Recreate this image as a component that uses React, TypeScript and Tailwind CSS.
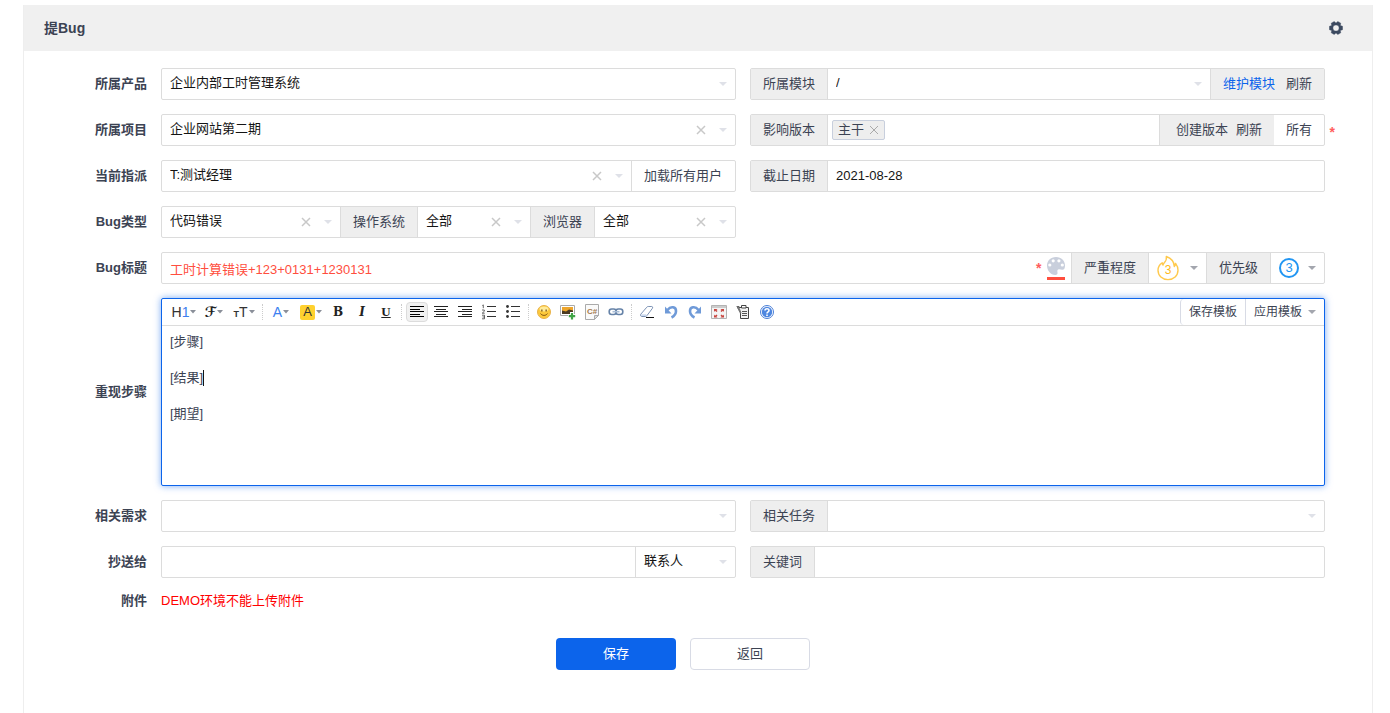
import clsx from "clsx";
import { useState } from "react";
import type { ReactNode } from "react";

type Children = { children?: ReactNode; className?: string };

function Caret({ className }: { className?: string }) {
  return (
    <svg viewBox="0 0 8 4" className={clsx("pointer-events-none h-1 w-2 fill-current", className)} aria-hidden="true">
      <path d="M0 0h8L4 4z" />
    </svg>
  );
}

function Cross({ className }: { className?: string }) {
  return (
    <svg viewBox="0 0 10 10" className={clsx("stroke-current", className)} fill="none" aria-hidden="true">
      <path d="M1 1l8 8M9 1l-8 8" />
    </svg>
  );
}

function Group({ children, className }: Children) {
  return (
    <div className={clsx("flex h-8 min-w-0 divide-x divide-[#dcdcdc] rounded-xs border border-[#dcdcdc] bg-white", className)}>
      {children}
    </div>
  );
}

function Addon({ children, htmlFor }: Children & { htmlFor: string }) {
  return (
    <label htmlFor={htmlFor} className="flex shrink-0 items-center bg-[#eeeeee] px-3">
      {children}
    </label>
  );
}

type SelectBoxProps = {
  id: string;
  value: string;
  label?: string;
  clearable?: boolean;
  className?: string;
};

function SelectBox({ id, value, label, clearable, className = "flex-1" }: SelectBoxProps) {
  const [current, setCurrent] = useState<string>(value);

  return (
    <div className={clsx("relative min-w-0", className)}>
      <select
        id={id}
        aria-label={label}
        value={current}
        onChange={(e) => setCurrent(e.target.value)}
        className="block h-7 w-full appearance-none bg-transparent pr-11 pl-2 text-[#141414] outline-none"
      >
        <option value={value}>{value}</option>
        {value && <option value="" />}
      </select>
      {clearable && (
        <button
          type="button"
          aria-label="清除"
          onClick={() => setCurrent("")}
          className="absolute inset-y-0 right-7 flex w-3 items-center justify-center text-[#c8c8c8]"
        >
          <Cross className="size-[10px] stroke-[1.5]" />
        </button>
      )}
      <Caret className="absolute top-[13px] right-2 text-[#dfe1e8]" />
    </div>
  );
}

function Row({ label, htmlFor, children, className = "h-8" }: Children & { label: string; htmlFor?: string }) {
  return (
    <div className="flex items-center gap-3.5">
      <label htmlFor={htmlFor} className={clsx("flex w-[106px] shrink-0 items-center justify-end font-bold", className)}>
        {label}
      </label>
      {children}
    </div>
  );
}

function Columns({ children }: Children) {
  return <div className="grid min-w-0 flex-1 grid-cols-2 gap-3.5">{children}</div>;
}

function Gear() {
  return (
    <svg viewBox="0 0 14 14" className="size-[14px]" aria-hidden="true">
      <path
        fill="#3c4a60"
        stroke="#3c4a60"
        strokeWidth=".4"
        strokeLinejoin="round"
        fillRule="evenodd"
        d="M13.600 5.300v3.400L11.300 9.500l.5 2.300-3 1.800L7 11.900l-1.800 1.700-3-1.800.5-2.300-2.300-.8V5.300l2.300-.8-.5-2.300 3-1.800L7 2.100 8.800.4l3 1.800-.5 2.300zM7 3.900a3.100 3.100 0 1 0 0 6.200 3.100 3.100 0 0 0 0-6.200z"
      />
    </svg>
  );
}

function Palette() {
  return (
    <svg viewBox="0 0 20 18" className="h-[18px] w-5" aria-hidden="true">
      <path
        fill="#c9cfdc"
        fillRule="evenodd"
        d="M10 0C4.500 0 1 3.800 1 8.600 1 13.700 4.500 18 9.300 18c1.700 0 2.500-1 2.200-2.400-.4-1.700-.2-3.200 1.600-3.300l3 .4c2 .2 2.900-1.500 2.900-4C19 3.600 15.500 0 10 0zM7.200 2.200a1.600 1.600 0 1 1 0 3.200 1.600 1.600 0 0 1 0-3.200zm5.700 0a1.600 1.600 0 1 1 0 3.200 1.600 1.600 0 0 1 0-3.200zM3.800 6.400a1.600 1.600 0 1 1 0 3.200 1.600 1.600 0 0 1 0-3.200zm12.500 0a1.600 1.600 0 1 1 0 3.200 1.600 1.600 0 0 1 0-3.200z"
      />
    </svg>
  );
}

function Flame() {
  return (
    <svg viewBox="0 0 22 26" className="h-[26px] w-[22px]" fill="none" stroke="#ffc94d" aria-hidden="true">
      <path
        strokeWidth="1.400"
        strokeLinejoin="round"
        d="M9.300 1.500c.6 2.700-.3 4.400-2 6.200-.7.800-1.100 1.500-1.300 2.300-.5-.7-.8-1.400-.8-2.200C2.300 9.600 1 12.300 1 15.300 1 20.700 5.300 24.600 11 24.600s10-3.900 10-9.300c0-2.500-.9-4.900-2.400-6.900-.1 1.300-.5 2.200-1.300 3-.2-4.500-3.200-8.200-8-9.900z"
      />
    </svg>
  );
}

function Tool({ title, children, active, wide }: Children & { title: string; active?: boolean; wide?: boolean }) {
  return (
    <div className={clsx("flex shrink-0 items-center justify-center", wide ? "w-[30px]" : "w-6")}>
      <button
        type="button"
        title={title}
        className={clsx(
          "flex h-5 items-center justify-center rounded-sm border",
          wide ? "gap-px" : "w-[22px]",
          active ? "border-[#dcdcdc] bg-[#f1f1f1]" : "border-transparent",
        )}
      >
        {children}
        {wide && (
          <svg viewBox="0 0 6 4" className="h-1 w-1.5" fill="#8a8f99" aria-hidden="true">
            <path d="M0 0h6L3 3.500z" />
          </svg>
        )}
      </button>
    </div>
  );
}

function Separator() {
  return (
    <div className="flex w-[7px] shrink-0 items-center justify-center">
      <div className="h-4 border-l border-dotted border-[#cccccc]" />
    </div>
  );
}

function Icon({ children }: Children) {
  return (
    <svg viewBox="0 0 16 16" className="size-4 shrink-0" fill="none" aria-hidden="true">
      {children}
    </svg>
  );
}

function Toolbar() {
  return (
    <div className="flex h-[27px] border-b border-[#dcdcdc]">
      <div className="flex flex-1 overflow-hidden pl-[7px]">
        <Tool title="段落" wide>
          <span className="text-sm text-[#333333]">
            H<span className="text-[#3d7ff0]">1</span>
          </span>
        </Tool>
        <Tool title="字体" wide>
          <span className="font-['DejaVu_Sans',sans-serif] text-sm font-bold text-[#222222] italic">ℱ</span>
        </Tool>
        <Tool title="文字大小" wide>
          <span className="text-sm text-[#333333]">
            <span className="text-[9px] font-bold">T</span>T
          </span>
        </Tool>
        <Separator />
        <Tool title="文字颜色" wide>
          <span className="text-sm text-[#3d7ff0]">A</span>
        </Tool>
        <Tool title="文字背景" wide>
          <span className="flex h-[15px] w-[15px] items-center justify-center rounded-xs bg-[#ffd12f] text-[13px] text-[#333333]">A</span>
        </Tool>
        <Tool title="粗体">
          <span className="font-['DejaVu_Serif',serif] text-xs font-bold text-[#222222]">B</span>
        </Tool>
        <Tool title="斜体">
          <span className="font-['DejaVu_Serif',serif] text-xs font-bold text-[#222222] italic">I</span>
        </Tool>
        <Tool title="下划线">
          <span className="font-['Liberation_Serif',serif] text-[13px] font-bold text-[#222222] underline">U</span>
        </Tool>
        <Separator />
        <Tool title="左对齐" active>
          <Icon>
            <path stroke="#000" d="M1 2.500h14M1 5.500h10M1 7.500h14M1 10.500h10M1 12.500h14" />
          </Icon>
        </Tool>
        <Tool title="居中">
          <Icon>
            <path stroke="#222" d="M1 2.500h14M3 5.500h10M1 7.500h14M3 10.500h10M1 12.500h14" />
          </Icon>
        </Tool>
        <Tool title="右对齐">
          <Icon>
            <path stroke="#222" d="M1 2.500h14M5 5.500h10M1 7.500h14M5 10.500h10M1 12.500h14" />
          </Icon>
        </Tool>
        <Tool title="编号">
          <Icon>
            <path stroke="#333" d="M6 2.500h9M6 7.500h9M6 12.500h9" />
            <path stroke="#444" strokeWidth=".8" d="M1.300 1.500l1-.6v3.300M1 6h2.300v1.300L1.200 9.200h2.500M1 11.200h2.500v3.600H1M1.500 13h2" />
          </Icon>
        </Tool>
        <Tool title="项目符号">
          <Icon>
            <path stroke="#333" d="M6 2.500h9M6 7.500h9M6 12.500h9" />
            <circle cx="2.500" cy="2.500" r="1.400" fill="#333" />
            <circle cx="2.500" cy="7.500" r="1.400" fill="#333" />
            <circle cx="2.500" cy="12.500" r="1.400" fill="#333" />
          </Icon>
        </Tool>
        <Separator />
        <Tool title="插入表情">
          <Icon>
            <circle cx="8" cy="8" r="6.500" fill="#fcc93c" stroke="#e9b24a" />
            <ellipse cx="8" cy="5" rx="4.500" ry="2.500" fill="#ffeb9a" />
            <path fill="#7b5719" d="M5.200 5.500h1.300v2H5.200zM9.500 5.500h1.300v2H9.500z" />
            <path stroke="#8a5a14" d="M4.500 9.500c1.500 2.500 5.500 2.500 7 0" />
          </Icon>
        </Tool>
        <Tool title="图片">
          <Icon>
            <path fill="#fff" stroke="#aaa" d="M.5 1.500h14v10H.5z" />
            <path fill="#4a3a22" d="M2 3h11v7H2z" />
            <path fill="#eda52c" d="M2 3h11v3.500L9 5.500 6 7.500l-4-1z" />
            <path stroke="#fff" strokeWidth="4" d="M12 8v8M8 12h8" />
            <path stroke="#3fa446" strokeWidth="2.200" d="M12 9v6.500M8.800 12.200h6.400" />
          </Icon>
        </Tool>
        <Tool title="插入程序代码">
          <span className="relative flex size-4 items-center justify-center">
            <svg viewBox="0 0 16 16" className="absolute inset-0 size-4" fill="#fafafa" stroke="#aaaaaa" aria-hidden="true">
              <path d="M1.500.500h13v11l-4 4h-9z" />
              <path fill="#ddd" d="M10.500 15.500v-4h4z" />
            </svg>
            <span className="relative text-[8px] leading-none font-bold text-[#a5794a]">C#</span>
          </span>
        </Tool>
        <Tool title="超级链接">
          <Icon>
            <rect x="1.200" y="5" width="7" height="5.500" rx="2.500" stroke="#6683a8" strokeWidth="1.600" />
            <rect x="7.800" y="5" width="7" height="5.500" rx="2.500" stroke="#6683a8" strokeWidth="1.600" />
            <path stroke="#a9bdd6" strokeWidth="1.600" d="M4.500 7.700h7" />
          </Icon>
        </Tool>
        <Separator />
        <Tool title="删除格式">
          <Icon>
            <path fill="#fff" stroke="#7d93b5" strokeLinejoin="round" d="M1.500 10.500L7.800 3.200q.5-.7 1.400-.7h3.600q1.500.3.700 1.700L7.800 11.800q-.6.700-1.500.7H3q-2-.4-1.500-2z" />
            <path fill="#cfdcf0" d="M2 10.300h5.200l.3 1.200q-.6.500-1.300.5H3q-1.300-.3-1-1.700z" />
            <path stroke="#111" d="M7 13.500h8" />
          </Icon>
        </Tool>
        <Tool title="后退">
          <Icon>
            <path stroke="#6f9ad8" strokeWidth="2.600" d="M4.500 6C8 1.500 13 3 13 7c0 3-1.500 5-4.500 6.500" />
            <path fill="#6f9ad8" d="M2 2.500v7h6.500z" />
          </Icon>
        </Tool>
        <Tool title="前进">
          <Icon>
            <path stroke="#6f9ad8" strokeWidth="2.600" d="M11.500 6C8 1.500 3 3 3 7c0 3 1.500 5 4.500 6.500" />
            <path fill="#6f9ad8" d="M14 2.500v7H7.500z" />
          </Icon>
        </Tool>
        <Tool title="全屏显示">
          <Icon>
            <path fill="#f4f4f4" stroke="#b3b3b3" d="M.5 1.500h15v13H.5z" />
            <path fill="#ccc" d="M1 2h14v2H1z" />
            <path fill="#c8453f" d="M3 5h3.500L5.500 6l1 1L5.500 8 4 6.800 3 8zM13 5H9.500l1 1-1 1 1 1L12 6.800 13 8zM3 13.500h3.500l-1-1 1-1-1-1L4 11.700l-1-1.200zM13 13.500H9.500l1-1-1-1 1-1 1.500 1.200 1-1.200z" />
          </Icon>
        </Tool>
        <Tool title="源代码">
          <Icon>
            <path fill="#f2f2f2" stroke="#444" d="M4 3.500h9.500v11h-8v-6L2 2.500h2z" />
            <path fill="#fff" stroke="#444" d="M6.500 1.500h4.500v2.500H6.500z" />
            <path stroke="#555" d="M7 7.500h5M7 9.500h5M7 11.500h5" />
            <path fill="#777" d="M1.500 2l2.500.5 2.500 6.500-1.500.5z" />
          </Icon>
        </Tool>
        <Tool title="帮助">
          <Icon>
            <circle cx="8" cy="8" r="6.500" fill="#fff" stroke="#4a7ed6" />
            <circle cx="8" cy="8" r="5.200" fill="#4d86e0" />
            <path stroke="#fff" strokeWidth="1.600" d="M6 6.500C6 4.200 10 4.200 10 6.500 10 7.800 8 7.800 8 9.500M8 10.600v1.500" />
          </Icon>
        </Tool>
      </div>
      <button type="button" className="rounded-l-sm border-l border-[#d8dbe5] px-2 text-xs">
        保存模板
      </button>
      <button type="button" className="flex items-center gap-1.5 border-l border-[#d8dbe5] px-2 text-xs">
        应用模板
        <Caret className="text-[#a3a6ae]" />
      </button>
    </div>
  );
}

function Editor() {
  return (
    <div className="h-[188px] min-w-0 flex-1 rounded-xs border border-[#0c64eb] bg-white shadow-[0_0_7px_rgba(12,100,235,0.55)]">
      <Toolbar />
      <div className="relative">
        <textarea
          id="steps"
          defaultValue={"[步骤]\n\n[结果]\n\n[期望]"}
          className="block h-[158px] w-full resize-none bg-transparent px-2 py-[7px] leading-[18px] outline-none"
        />
        <span className="pointer-events-none absolute top-11 left-[41px] h-4 w-px bg-[#141414]" />
      </div>
    </div>
  );
}

export default function App() {
  return (
    <div className="flex min-h-screen flex-col bg-white pt-[5px] pr-[17px] pl-[23px] font-['Liberation_Sans','Noto_Sans_CJK_SC',sans-serif] text-[13px] leading-[18px] text-[#3c4353]">
      <main className="flex-1 border-x border-[#eeeeee]">
        <header className="flex h-[46px] items-center justify-between bg-[#f0f0f0] pr-[29px] pl-5">
          <h1 className="text-sm font-bold">提Bug</h1>
          <button type="button" aria-label="设置">
            <Gear />
          </button>
        </header>

        <form className="flex flex-col gap-3.5 pt-[17px] pr-[47px] pb-10 pl-[17px]" onSubmit={(e) => e.preventDefault()}>
          <Row label="所属产品" htmlFor="product">
            <Columns>
              <Group>
                <SelectBox id="product" value="企业内部工时管理系统" />
              </Group>
              <Group>
                <Addon htmlFor="module">所属模块</Addon>
                <SelectBox id="module" value="/" />
                <div className="flex shrink-0 items-center gap-[11px] bg-[#eeeeee] px-3">
                  <a href="#module" className="text-[#0c64eb]">
                    维护模块
                  </a>
                  <a href="#refresh">刷新</a>
                </div>
              </Group>
            </Columns>
          </Row>

          <Row label="所属项目" htmlFor="project">
            <Columns>
              <Group>
                <SelectBox id="project" value="企业网站第二期" clearable />
              </Group>
              <div className="relative">
                <Group>
                  <Addon htmlFor="build">影响版本</Addon>
                  <div className="flex min-w-0 flex-1 items-center gap-1 pl-1">
                    <span className="flex h-5 shrink-0 items-center gap-[5px] rounded-xs border border-[#c8cfdd] bg-[#eeeeee] px-[5px]">
                      主干
                      <button type="button" aria-label="移除主干" className="text-[#aaaaaa]">
                        <Cross className="size-[10px]" />
                      </button>
                    </span>
                    <input id="build" type="text" className="h-7 w-full min-w-0 flex-1 outline-none" />
                  </div>
                  <div className="flex shrink-0">
                    <div className="flex items-center gap-2 bg-[#eeeeee] pr-3 pl-4">
                      <a href="#create">创建版本</a>
                      <a href="#refresh">刷新</a>
                    </div>
                    <button type="button" className="px-3">
                      所有
                    </button>
                  </div>
                </Group>
                <span className="absolute top-2 -right-[10px] text-sm font-bold text-[#ff5d5d]">*</span>
              </div>
            </Columns>
          </Row>

          <Row label="当前指派" htmlFor="assigned">
            <Columns>
              <Group>
                <SelectBox id="assigned" value="T:测试经理" clearable />
                <button type="button" className="shrink-0 pr-[13px] pl-3">
                  加载所有用户
                </button>
              </Group>
              <Group>
                <Addon htmlFor="deadline">截止日期</Addon>
                <input id="deadline" type="text" defaultValue="2021-08-28" className="min-w-0 flex-1 px-2 text-[#141414] outline-none" />
              </Group>
            </Columns>
          </Row>

          <Row label="Bug类型" htmlFor="type">
            <Columns>
              <Group>
                <SelectBox id="type" value="代码错误" clearable className="flex-[178_1_0%]" />
                <Addon htmlFor="os">操作系统</Addon>
                <SelectBox id="os" value="全部" clearable className="flex-[112_1_0%]" />
                <Addon htmlFor="browser">浏览器</Addon>
                <SelectBox id="browser" value="全部" clearable className="flex-[140_1_0%]" />
              </Group>
            </Columns>
          </Row>

          <Row label="Bug标题" htmlFor="title">
            <Group className="flex-1">
              <div className="flex min-w-0 flex-1 items-center pr-[5px]">
                <input
                  id="title"
                  type="text"
                  defaultValue="工时计算错误+123+0131+1230131"
                  className="h-7 min-w-0 flex-1 px-2 text-[#ff4e3e] outline-none"
                />
                <span className="w-2.5 text-sm font-bold text-[#ff5d5d]">*</span>
                <button type="button" aria-label="标题颜色" className="flex flex-col items-center gap-[2px]">
                  <Palette />
                  <span className="h-[3px] w-[18px] bg-[#ff4e3e]" />
                </button>
              </div>
              <Addon htmlFor="severity">严重程度</Addon>
              <div className="relative flex shrink-0 items-center gap-[11px] px-2">
                <span className="relative flex items-center justify-center">
                  <Flame />
                  <span className="absolute inset-x-0 top-[7px] text-center text-xs text-[#ffb919]">3</span>
                </span>
                <Caret className="text-[#a3a6ae]" />
                <select id="severity" defaultValue="3" className="absolute inset-0 opacity-0">
                  <option>1</option>
                  <option>2</option>
                  <option>3</option>
                  <option>4</option>
                </select>
              </div>
              <Addon htmlFor="pri">优先级</Addon>
              <div className="relative flex shrink-0 items-center gap-[9px] px-2">
                <span className="flex size-5 items-center justify-center rounded-full border-2 border-[#2196f3] text-[#2196f3]">
                  3
                </span>
                <Caret className="text-[#a3a6ae]" />
                <select id="pri" defaultValue="3" className="absolute inset-0 opacity-0">
                  <option>1</option>
                  <option>2</option>
                  <option>3</option>
                  <option>4</option>
                </select>
              </div>
            </Group>
          </Row>

          <Row label="重现步骤" htmlFor="steps">
            <Editor />
          </Row>

          <Row label="相关需求" htmlFor="story">
            <Columns>
              <Group>
                <SelectBox id="story" value="" />
              </Group>
              <Group>
                <Addon htmlFor="task">相关任务</Addon>
                <SelectBox id="task" value="" />
              </Group>
            </Columns>
          </Row>

          <Row label="抄送给" htmlFor="mailto">
            <Columns>
              <Group>
                <input id="mailto" type="text" className="min-w-0 flex-1 px-2 outline-none" />
                <SelectBox id="contacts" label="联系人" value="联系人" className="w-[99px] shrink-0" />
              </Group>
              <Group>
                <Addon htmlFor="keywords">关键词</Addon>
                <input id="keywords" type="text" className="min-w-0 flex-1 px-2 outline-none" />
              </Group>
            </Columns>
          </Row>

          <Row label="附件" className="h-[18px]">
            <p className="text-[#ff0000]">DEMO环境不能上传附件</p>
          </Row>

          <div className="flex justify-center gap-3.5 pt-3.5">
            <button type="submit" className="h-8 w-[120px] rounded-sm bg-[#0c64eb] text-white">
              保存
            </button>
            <button type="button" className="h-8 w-[120px] rounded-sm border border-[#d8dbe5] bg-white">
              返回
            </button>
          </div>
        </form>
      </main>
    </div>
  );
}
